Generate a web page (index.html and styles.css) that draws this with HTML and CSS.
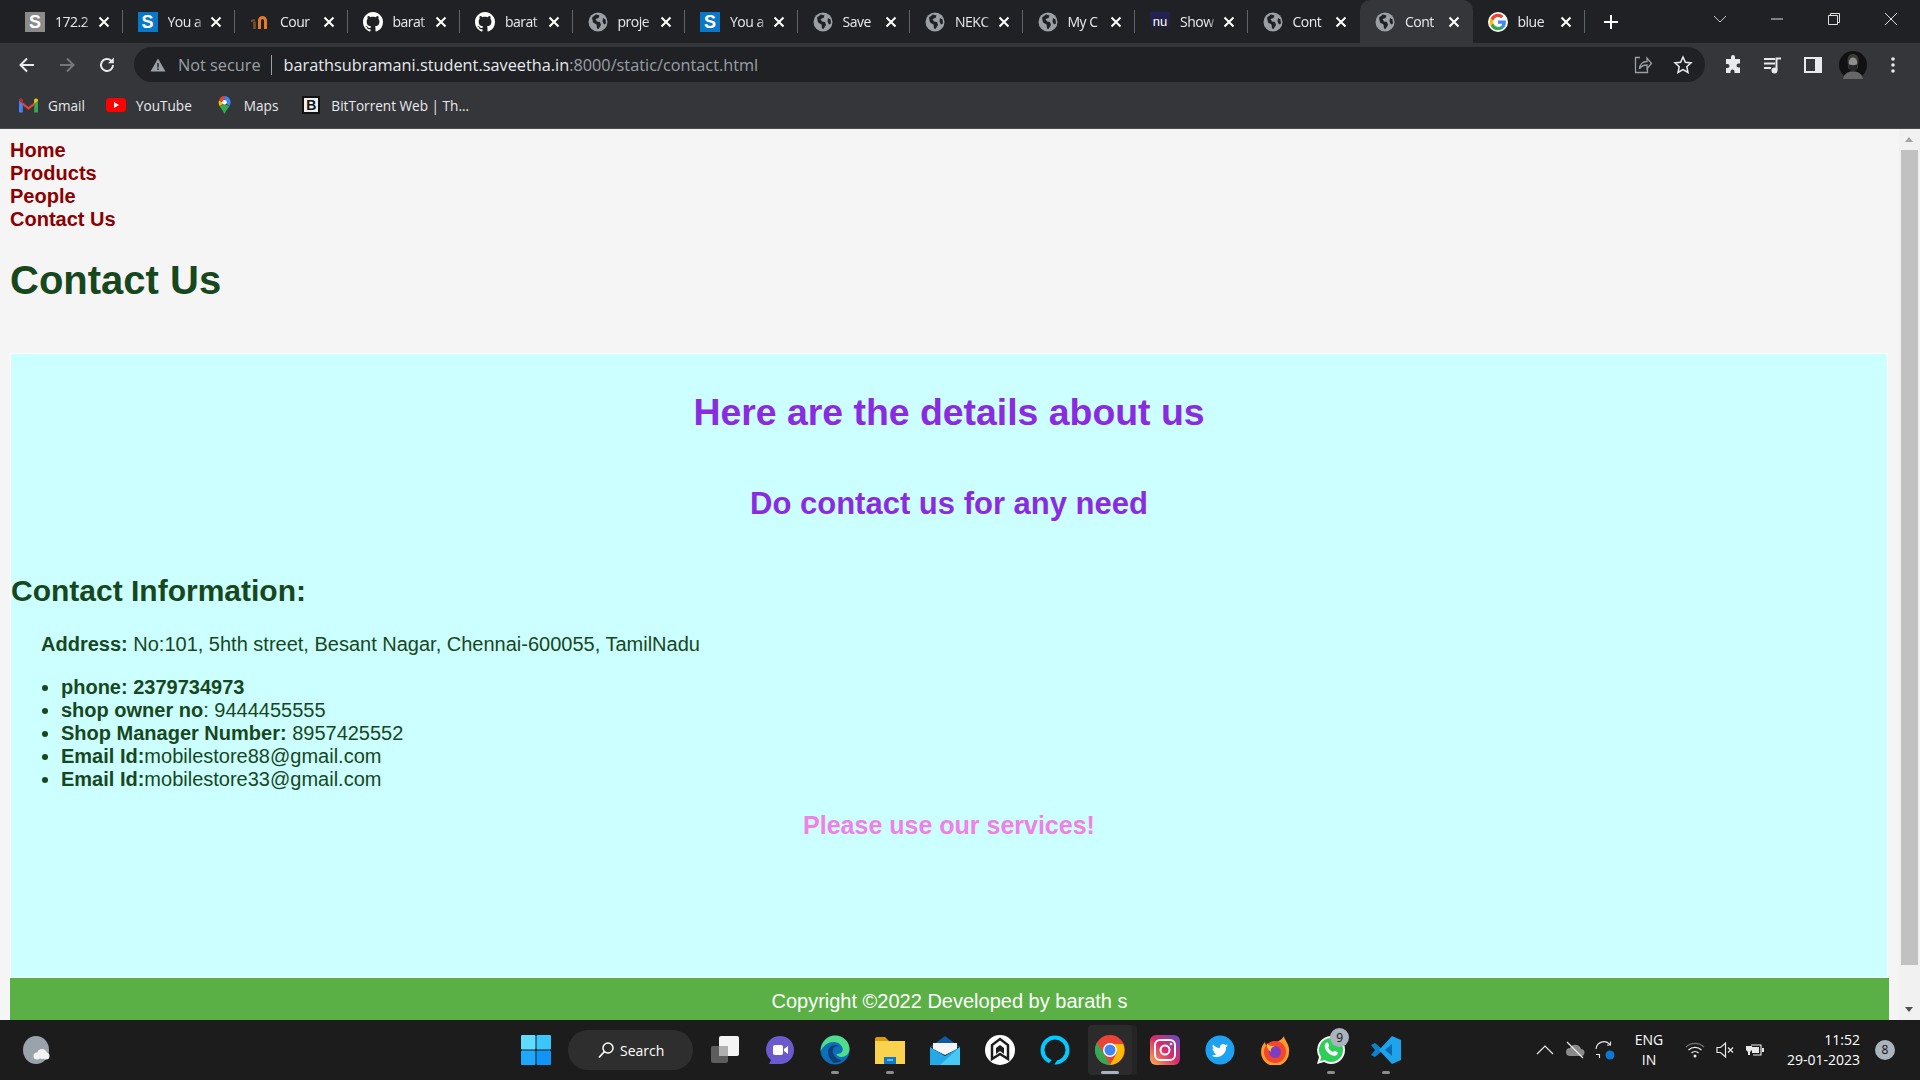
FILE: index.html
```html
<!DOCTYPE html>
<html lang="en">
<head>
    <meta charset="UTF-8">
    <title>Contact Us</title>
    <link rel="stylesheet" href="styles.css">
</head>
<body>
    <svg class="sprites" width="0" height="0">
        <symbol id="globe" viewBox="0 0 20 20">
            <circle cx="10" cy="10" r="9.5" fill="#9aa0a6"/>
            <path fill="#202124" d="M4 5.5 8 2.5l3.5 1-1 2.5-3 1 1.500 2.500 3 .5 1 3-2.500 4-1.500-.5-.5-4-3.500-2zM15 6l2.500 1.500.5 4-2 1-1.500-3z"/>
        </symbol>
        <symbol id="github" viewBox="0 0 16 16">
            <path fill="#fff" d="M8 0C3.58 0 0 3.58 0 8c0 3.54 2.29 6.53 5.47 7.59.4.07.55-.17.55-.38 0-.19-.01-.82-.01-1.49-2.01.37-2.53-.49-2.69-.94-.09-.23-.48-.94-.82-1.13-.28-.15-.68-.52-.01-.53.63-.01 1.08.58 1.23.82.72 1.21 1.87.87 2.33.66.07-.52.28-.87.51-1.07-1.78-.2-3.64-.89-3.64-3.95 0-.87.31-1.59.82-2.15-.08-.2-.36-1.02.08-2.12 0 0 .67-.21 2.2.82.64-.18 1.32-.27 2-.27.68 0 1.36.09 2 .27 1.53-1.04 2.2-.82 2.2-.82.44 1.1.16 1.92.08 2.12.51.56.82 1.27.82 2.15 0 3.07-1.87 3.75-3.65 3.95.29.25.54.73.54 1.48 0 1.07-.01 1.93-.01 2.2 0 .21.15.46.55.38A8.013 8.013 0 0016 8c0-4.42-3.58-8-8-8z"/>
        </symbol>
        <symbol id="close" viewBox="0 0 12 12">
            <path stroke="#fff" stroke-width="2" d="M1.500 1.500l9 9M10.500 1.500l-9 9"/>
        </symbol>
    </svg>

    <div class="tabstrip">
        <div class="tab"><span class="favicon fav-grey">S</span><span class="tab-title">172.2</span><svg class="tab-close"><use href="#close"/></svg></div>
        <div class="tab"><span class="favicon fav-blue">S</span><span class="tab-title">You a</span><svg class="tab-close"><use href="#close"/></svg></div>
        <div class="tab"><svg class="favicon" viewBox="0 0 20 20"><path fill="none" stroke="#e8792b" stroke-width="3" d="M9.500 17V8.500a2.500 2.500 0 0 1 6 0V17"/><path fill="none" stroke="#7a5230" stroke-width="2.500" d="M4.500 17V9.500"/><path fill="none" stroke="#7a5230" stroke-width="2" d="M1 9.500c1-1 2.500-1.500 4-1"/></svg><span class="tab-title">Cour</span><svg class="tab-close"><use href="#close"/></svg></div>
        <div class="tab"><svg class="favicon"><use href="#github"/></svg><span class="tab-title">barat</span><svg class="tab-close"><use href="#close"/></svg></div>
        <div class="tab"><svg class="favicon"><use href="#github"/></svg><span class="tab-title">barat</span><svg class="tab-close"><use href="#close"/></svg></div>
        <div class="tab"><svg class="favicon"><use href="#globe"/></svg><span class="tab-title">proje</span><svg class="tab-close"><use href="#close"/></svg></div>
        <div class="tab"><span class="favicon fav-blue">S</span><span class="tab-title">You a</span><svg class="tab-close"><use href="#close"/></svg></div>
        <div class="tab"><svg class="favicon"><use href="#globe"/></svg><span class="tab-title">Save</span><svg class="tab-close"><use href="#close"/></svg></div>
        <div class="tab"><svg class="favicon"><use href="#globe"/></svg><span class="tab-title">NEKC</span><svg class="tab-close"><use href="#close"/></svg></div>
        <div class="tab"><svg class="favicon"><use href="#globe"/></svg><span class="tab-title">My C</span><svg class="tab-close"><use href="#close"/></svg></div>
        <div class="tab"><span class="favicon fav-nu">nu</span><span class="tab-title">Show</span><svg class="tab-close"><use href="#close"/></svg></div>
        <div class="tab no-sep"><svg class="favicon"><use href="#globe"/></svg><span class="tab-title">Cont</span><svg class="tab-close"><use href="#close"/></svg></div>
        <div class="tab active"><svg class="favicon"><use href="#globe"/></svg><span class="tab-title">Cont</span><svg class="tab-close"><use href="#close"/></svg></div>
        <div class="tab"><svg class="favicon" viewBox="-2 -2 22 22"><circle cx="9" cy="9" r="11" fill="#fff"/><path fill="#4285F4" d="M17.640 9.200c0-.64-.06-1.250-.16-1.840H9v3.480h4.840a4.140 4.140 0 0 1-1.800 2.720v2.260h2.920c1.700-1.570 2.680-3.880 2.680-6.620z"/><path fill="#34A853" d="M9 18c2.430 0 4.470-.8 5.960-2.180l-2.920-2.260c-.8.54-1.830.86-3.040.86-2.340 0-4.320-1.580-5.030-3.700H.96v2.330A9 9 0 0 0 9 18z"/><path fill="#FBBC05" d="M3.970 10.710A5.410 5.410 0 0 1 3.680 9c0-.59.1-1.170.29-1.710V4.960H.96A9 9 0 0 0 0 9c0 1.450.35 2.830.96 4.040l3.010-2.330z"/><path fill="#EA4335" d="M9 3.580c1.320 0 2.500.45 3.440 1.350l2.580-2.580A9 9 0 0 0 9 0 9 9 0 0 0 .96 4.960l3.010 2.330C4.680 5.160 6.660 3.580 9 3.580z"/></svg><span class="tab-title">blue</span><svg class="tab-close"><use href="#close"/></svg></div>
        <svg class="new-tab" viewBox="0 0 16 16"><path stroke="#fff" stroke-width="2" d="M8 1v14M1 8h14"/></svg>
        <div class="window-controls">
            <svg viewBox="0 0 14 14"><path fill="none" stroke="#c8c8c8" d="M1 4l6 6 6-6"/></svg>
            <svg viewBox="0 0 14 14"><path stroke="#e0e0e0" d="M1 7h12"/></svg>
            <svg viewBox="0 0 14 14"><path fill="none" stroke="#e0e0e0" d="M1.500 3.500h9v9h-9zM3.500 3.500v-2h9v9h-2"/></svg>
            <svg viewBox="0 0 14 14"><path stroke="#e0e0e0" d="M1 1l12 12M13 1L1 13"/></svg>
        </div>
    </div>

    <div class="toolbar">
        <div class="tool"><svg viewBox="0 0 20 20"><path fill="none" stroke="#e8eaed" stroke-width="2" d="M17 10H4M10 3.500L3.500 10l6.500 6.500"/></svg></div>
        <div class="tool"><svg viewBox="0 0 20 20"><path fill="none" stroke="#74777b" stroke-width="2" d="M3 10h13M10 3.500l6.500 6.500-6.500 6.500"/></svg></div>
        <div class="tool"><svg viewBox="0 0 20 20"><path fill="none" stroke="#e8eaed" stroke-width="2" d="M16 10a6 6 0 1 1-1.800-4.300"/><path fill="#e8eaed" d="M16.800 2.500v5.800H11z"/></svg></div>
        <div class="omnibox">
            <svg class="warn" viewBox="0 0 16 16"><path fill="#9aa0a6" d="M8 1.500l7.500 13H.5z"/><path stroke="#202124" stroke-width="1.400" d="M8 6v4.500M8 11.500v1.500"/></svg>
            <span class="not-secure">Not secure</span>
            <span class="url"><span class="url-host">barathsubramani.student.saveetha.in</span>:8000/static/contact.html</span>
            <div class="tool"><svg viewBox="0 0 20 20"><path fill="none" stroke="#9aa0a6" stroke-width="1.300" d="M7 2.500H2.500v15h12V13M6.500 14c0-5 3.500-7.500 7.500-7.500V3l4.500 5.500L14 13.500V10c-3.500 0-6 1-7.500 4z"/></svg></div>
            <div class="tool"><svg viewBox="0 0 20 20"><path fill="none" stroke="#e8eaed" stroke-width="1.500" d="M10 2l2.400 5.300 5.600.6-4.200 3.800 1.200 5.800-5-2.900-5 2.900 1.200-5.800L2 7.900l5.600-.6z"/></svg></div>
        </div>
        <div class="tool"><svg viewBox="0 0 20 20"><path fill="#e8eaed" d="M8 2a2 2 0 0 1 4 0v2h5v4.500h-1.500a2 2 0 0 0 0 4H17V18h-5.500v-1.500a2 2 0 0 0-4 0V18H3v-5h1.500a2 2 0 0 0 0-4H3V4h5z"/></svg></div>
        <div class="tool"><svg viewBox="0 0 20 20"><path stroke="#e8eaed" stroke-width="1.800" d="M1 4h11M1 8.500h11M1 13h7"/><path fill="none" stroke="#e8eaed" stroke-width="2" d="M13.500 15V3.500H18"/><circle cx="11.500" cy="15.500" r="3" fill="#e8eaed"/></svg></div>
        <div class="tool"><svg viewBox="0 0 20 20"><path fill="none" stroke="#e8eaed" stroke-width="2" d="M2 3h16v14H2z"/><path fill="#e8eaed" d="M12 3h6v14h-6z"/></svg></div>
        <div class="tool"><svg class="avatar" viewBox="0 0 28 28"><circle cx="14" cy="14" r="14" fill="#111"/><path fill="#3a3a3a" d="M8.500 9c0-4 2.500-6 5.500-6s5.500 2 5.500 6l-.5 8-5 4-5-4z"/><ellipse cx="14" cy="11.500" rx="4.200" ry="5" fill="#8f8f8f"/><path fill="#262626" d="M9.500 13c1.500 1.500 7.500 1.500 9 0l-1 6-3.500 2-3.500-2z"/><path fill="#666" d="M4 28c1-5 4-7.500 10-7.500s9 2.500 10 7.500z"/></svg></div>
        <div class="tool"><svg viewBox="0 0 20 20"><circle cx="10" cy="4" r="1.800" fill="#e8eaed"/><circle cx="10" cy="10" r="1.800" fill="#e8eaed"/><circle cx="10" cy="16" r="1.800" fill="#e8eaed"/></svg></div>
    </div>

    <div class="bookmarks">
        <div class="bookmark bm-gmail"><svg viewBox="0 0 20 16"><path fill="#ea4335" d="M1 3l9 7 9-7v3l-9 7-9-7z"/><path fill="#4285f4" d="M0 3a2 2 0 0 1 3-1.500L4 2.300V16H1a1 1 0 0 1-1-1z"/><path fill="#34a853" d="M20 3a2 2 0 0 0-3-1.500l-1 .8V16h3a1 1 0 0 0 1-1z"/><path fill="#c5221f" d="M0 3.500 4 6.600V2.300L3 1.500A2 2 0 0 0 0 3.500z"/><path fill="#fbbc04" d="M20 3.500 16 6.600V2.300l1-.8A2 2 0 0 1 20 3.500z"/></svg>Gmail</div>
        <div class="bookmark bm-youtube"><svg viewBox="0 0 20 14"><rect width="20" height="14" rx="3.500" fill="#f00"/><path fill="#fff" d="M8 4l5 3-5 3z"/></svg>YouTube</div>
        <div class="bookmark bm-maps"><svg viewBox="0 0 14 20"><path fill="#34a853" d="M7 20c-1-3-4-6-5.500-9L7 9l5.500 2C11 14 8 17 7 20z"/><path fill="#fbbc04" d="M1.500 11A6.500 6.500 0 0 1 1 5l6 3z"/><path fill="#ea4335" d="M1 5a6.500 6.500 0 0 1 6-5v7z"/><path fill="#4285f4" d="M7 0a7 7 0 0 1 5.500 11L7 7z"/><circle cx="7" cy="7" r="2.500" fill="#fff"/></svg>Maps</div>
        <div class="bookmark bm-bittorrent"><span class="bt-icon">B</span>BitTorrent Web | Th...</div>
    </div>

    <div class="viewport">
        <div class="page">
            <nav class="site-nav">
                <a href="#">Home</a>
                <a href="#">Products</a>
                <a href="#">People</a>
                <a href="#">Contact Us</a>
            </nav>
            <h1>Contact Us</h1>
            <section class="details">
                <h2>Here are the details about us</h2>
                <h3>Do contact us for any need</h3>
                <h4>Contact Information:</h4>
                <p class="address"><b>Address:</b> No:101, 5hth street, Besant Nagar, Chennai-600055, TamilNadu</p>
                <ul>
                    <li><b>phone: 2379734973</b></li>
                    <li><b>shop owner no</b>: 9444455555</li>
                    <li><b>Shop Manager Number:</b> 8957425552</li>
                    <li><b>Email Id:</b>mobilestore88@gmail.com</li>
                    <li><b>Email Id:</b>mobilestore33@gmail.com</li>
                </ul>
                <p class="services">Please use our services!</p>
            </section>
            <footer>Copyright ©2022 Developed by barath s</footer>
        </div>
        <div class="scrollbar">
            <span class="arrow-up"></span>
            <span class="thumb"></span>
            <span class="arrow-down"></span>
        </div>
    </div>

    <div class="taskbar">
        <svg class="widget" viewBox="0 0 30 30"><ellipse cx="14" cy="15" rx="13" ry="14" fill="#9aa3ac"/><circle cx="20" cy="19" r="5" fill="#f2f2f2"/><circle cx="15" cy="21" r="3.500" fill="#f2f2f2"/><circle cx="24" cy="21" r="3.500" fill="#f2f2f2"/></svg>
        <div class="start-cell">
            <svg viewBox="0 0 30 30"><rect width="14.500" height="14.500" rx="1" fill="#5fdcff"/><rect x="15.500" width="14.500" height="14.500" rx="1" fill="#3bc6fb"/><rect y="15.500" width="14.500" height="14.500" rx="1" fill="#1ea7fb"/><rect x="15.500" y="15.500" width="14.500" height="14.500" rx="1" fill="#0f94f8"/></svg>
        </div>
        <div class="search-pill"><svg viewBox="0 0 18 18"><circle cx="11" cy="7" r="5" fill="none" stroke="#fff" stroke-width="1.500"/><path stroke="#fff" stroke-width="1.700" d="M7.500 10.500L2 16.500"/></svg>Search</div>
        <div class="apps">
            <div class="app"><svg viewBox="0 0 30 30"><rect x="1" y="11" width="17" height="17" rx="2" fill="#5d5d5d"/><rect x="9" y="1" width="20" height="20" rx="2" fill="#f4f4f4"/><rect x="9" y="11" width="9" height="10" fill="#b0b0b0"/></svg></div>
            <div class="app teams"><svg viewBox="0 0 30 30"><path fill="#6a5acd" d="M15 1c8 0 14 6 14 14s-6 14-14 14H4l2-4a14 14 0 0 1-5-10C1 7 7 1 15 1z"/><rect x="8" y="10" width="10" height="10" rx="2" fill="#fff"/><path fill="#fff" d="M19 14l4-3v8l-4-3z"/></svg></div>
            <div class="app on"><svg viewBox="0 0 30 30"><circle cx="15" cy="15" r="14.500" fill="#0c6fb8"/><path fill="#4fdc8c" d="M15 .5c8 0 14.500 6 14.500 13.500 0 5-4 8-8 8-3 0-5-1.500-5-3 5 0 7-3 6-6-1.500-4-5-6-9-6-6 0-10 4-13 9C1 7 7 .5 15 .5z"/><path fill="#103f78" d="M8 17c0-4 3-7 7-7 2 0 3 .5 4 1.500-4-1-7 2-6 6 1 5 6 8 10 7.500a14 14 0 0 1-9 3C10 25 8 21 8 17z"/></svg></div>
            <div class="app on"><svg viewBox="0 0 30 30"><path fill="#d79c0c" d="M0 4a2 2 0 0 1 2-2h8l4 4h-14z"/><path fill="#fbd24e" d="M0 6h30v23H0z"/><rect x="9" y="22" width="12" height="7" fill="#0f78c8"/><path stroke="#7fcbf5" stroke-width="1.500" d="M12 25h6"/></svg></div>
            <div class="app"><svg viewBox="0 0 30 30"><path fill="#0d5aa7" d="M15 1L30 12H0z"/><path fill="#f5f5f5" d="M3 8h24v6L15 20 3 14z"/><path fill="#23a9e8" d="M0 12l15 9 15-9v18H0z"/><path fill="#48c9f5" d="M30 12v18H10z"/></svg></div>
            <div class="app"><svg viewBox="0 0 30 30"><circle cx="15" cy="15" r="15" fill="#fff"/><path fill="none" stroke="#1c1c1c" stroke-width="2.500" d="M7 24V10l8-6 8 6v14l-8-5z"/><path fill="#1c1c1c" d="M11 13l4-3 4 3v6l-4-3-4 3z"/></svg></div>
            <div class="app"><svg viewBox="0 0 30 30"><circle cx="15" cy="15" r="12.500" fill="none" stroke="#00caff" stroke-width="4"/><path fill="#1c1c1c" d="M8 29l7-7 3 2-4 6z"/></svg></div>
            <div class="app chrome-app"><svg viewBox="0 0 30 30"><circle cx="15" cy="15" r="15" fill="#ea4335"/><path fill="#34a853" d="M15 30A15 15 0 0 1 2 7.500L9 19l6 11z"/><path fill="#fbbc04" d="M15 30l7.500-13L15 9h13a15 15 0 0 1-13 21z"/><circle cx="15" cy="15" r="7" fill="#fff"/><circle cx="15" cy="15" r="5.500" fill="#4285f4"/></svg></div>
            <div class="app"><svg viewBox="0 0 30 30"><defs><linearGradient id="insta" x1="0" y1="1" x2="1" y2="0"><stop offset="0" stop-color="#fdb44b"/><stop offset=".5" stop-color="#dc2a6b"/><stop offset="1" stop-color="#5b4fc8"/></linearGradient></defs><rect width="30" height="30" rx="6" fill="url(#insta)"/><rect x="5" y="5" width="20" height="20" rx="5" fill="none" stroke="#fff" stroke-width="2"/><circle cx="15" cy="15" r="4.500" fill="none" stroke="#fff" stroke-width="2"/><circle cx="21" cy="9" r="1.300" fill="#fff"/></svg></div>
            <div class="app"><svg viewBox="0 0 30 30"><circle cx="15" cy="15" r="14.500" fill="#1da1f2"/><path fill="#fff" d="M23 10.500c-.6.300-1.200.4-1.900.5.700-.4 1.200-1 1.400-1.800-.6.400-1.300.6-2.100.8a3.300 3.300 0 0 0-5.600 3C12 12.800 9.600 11.500 8 9.500c-.9 1.500-.4 3.400 1 4.400-.5 0-1-.2-1.500-.4 0 1.600 1.100 3 2.600 3.300-.5.100-1 .1-1.500 0 .4 1.300 1.600 2.200 3.100 2.300-1.400 1.100-3.200 1.600-4.900 1.400 1.500 1 3.200 1.500 5 1.500 6.100 0 9.500-5.100 9.300-9.700.7-.5 1.200-1.100 1.900-1.800z"/></svg></div>
            <div class="app"><svg viewBox="0 0 30 30"><path fill="#ff9a2e" d="M24 1c0 4 6 8 5 16a14 14 0 0 1-28 0c0-5 2-8 4-10 0 2 1 3 2 4 2-4 6-5 8-3 3-2 7-3 9-7z"/><circle cx="15" cy="17" r="11" fill="#f5452c"/><circle cx="15" cy="17" r="6" fill="#7b3fc4"/><path fill="#ffc13d" d="M7 8c1 3 5 3 8 3-3 1-5 3-4 6-3-2-5-5-4-9z"/></svg></div>
            <div class="app on whatsapp"><svg viewBox="0 0 30 30"><path fill="#fff" d="M15 1a14 14 0 0 1 0 28 14 14 0 0 1-7-2l-7 2 2-7A14 14 0 0 1 15 1z"/><path fill="#2ecf58" d="M15 3a12 12 0 0 1 0 24c-2.500 0-4.500-.8-6.500-2l-4.500 1.300 1.300-4.300A12 12 0 0 1 15 3z"/><path fill="#fff" d="M10 8c1-.8 2-.5 2.400.5l.8 2c.2.600-.6 1.500-1 2 1 2 2.500 3.500 4.800 4.600.5-.6 1.200-1.500 1.800-1.300l2.400 1.200c.8.500.6 1.700 0 2.400-3 3-7 .5-9.500-2C9 14.500 7.500 10.500 10 8z"/></svg><span class="badge">9</span></div>
            <div class="app on"><svg viewBox="0 0 30 30"><path fill="#0a84d0" d="M0 10l4-2 8 7-8 7-4-2 4-5z"/><path fill="#1ea4ed" d="M21 1l9 4v20l-9 4L8 15z"/><path fill="#0a6cb0" d="M21 9v12l-7-6z"/></svg></div>
        </div>
        <div class="tray">
            <div class="tray-cell"><svg viewBox="0 0 20 20"><path fill="none" stroke="#e8e8e8" stroke-width="1.200" d="M2 14l8-8 8 8"/></svg></div>
            <div class="tray-cell"><svg viewBox="0 0 20 20"><path fill="#8a8a8a" d="M5 16a4 4 0 0 1 0-8 6 6 0 0 1 11 1 3.500 3.500 0 0 1 0 7z"/><path stroke="#e8e8e8" stroke-width="1.200" d="M2 2l16 16"/></svg></div>
            <div class="tray-cell"><svg viewBox="0 0 20 20"><path fill="none" stroke="#e8e8e8" stroke-width="1.100" d="M1 9a8 8 0 0 1 14-4.500M15.500 1.500v3.500H12M1 14.500h3.500v3.500"/><circle cx="15" cy="15" r="4.500" fill="#0f78d4"/></svg></div>
            <div class="lang">ENG<br>IN</div>
            <div class="tray-cell"><svg viewBox="0 0 20 20"><path fill="none" stroke="#777" stroke-width="1.200" d="M1 7a13 13 0 0 1 18 0"/><path fill="none" stroke="#eee" stroke-width="1.300" d="M3.500 10a9.500 9.500 0 0 1 13 0M6.500 13a5 5 0 0 1 7 0"/><circle cx="10" cy="16" r="1.500" fill="#eee"/></svg></div>
            <div class="tray-cell"><svg viewBox="0 0 20 20"><path fill="none" stroke="#e8e8e8" stroke-width="1.200" d="M2 7.500h3.500l5-4.500v14l-5-4.500H2zM13 7.500l5 5M18 7.500l-5 5"/></svg></div>
            <div class="tray-cell"><svg viewBox="0 0 20 20"><path fill="none" stroke="#e8e8e8" stroke-width="1.200" d="M6 5h10v10H8"/><rect x="7" y="7" width="7" height="6" fill="#e8e8e8"/><path fill="#e8e8e8" d="M17 8h2v4h-2zM1 6h6v4l-2 2v3H3v-3L1 10z"/></svg></div>
            <div class="clock">11:52<br>29-01-2023</div>
            <span class="notif">8</span>
        </div>
    </div>
</body>
</html>
```

FILE: styles.css
```css
* {
    box-sizing: border-box;
}

html,
body {
    margin: 0;
    height: 100%;
    overflow: hidden;
}

body {
    display: flex;
    flex-direction: column;
    width: 1920px;
    height: 1080px;
    font-family: "Liberation Sans", Arial, sans-serif;
}

.sprites {
    display: block;
    height: 0;
}

/* browser chrome */

.tabstrip {
    display: flex;
    align-items: center;
    flex: none;
    height: 43px;
    padding-left: 10px;
    background-color: #202124;
    font-family: "Open Sans", sans-serif;
    font-size: 14px;
    color: #e8eaed;
}

.tab {
    position: relative;
    display: flex;
    align-items: center;
    flex: none;
    width: 112.5px;
    height: 100%;
    padding: 0 13px 0 15px;
}

.tab::after {
    content: "";
    position: absolute;
    right: 0;
    top: 10px;
    bottom: 10px;
    width: 1px;
    background-color: #5f6368;
}

.tab.no-sep::after,
.tab.active::after {
    display: none;
}

.tab.active {
    background-color: #35363a;
    border-radius: 10px 10px 0 0;
}

.favicon {
    display: block;
    flex: none;
    width: 20px;
    height: 20px;
    margin-right: 10px;
    font-family: "Liberation Sans", sans-serif;
    font-size: 18px;
    font-weight: bold;
    line-height: 20px;
    text-align: center;
    color: #fff;
}

.fav-grey {
    background-color: #8b8b8b;
}

.fav-blue {
    background-color: #0a78c8;
}

.fav-nu {
    font-size: 13px;
    font-weight: normal;
    background: linear-gradient(#23225a, #202124);
}

.tab-title {
    flex: 1;
    min-width: 0;
    white-space: nowrap;
    letter-spacing: -0.5px;
    -webkit-mask-image: linear-gradient(90deg, #000 75%, transparent);
    mask-image: linear-gradient(90deg, #000 75%, transparent);
}

.tab-close {
    flex: none;
    width: 12px;
    height: 12px;
    margin-left: 5px;
}

.new-tab {
    flex: none;
    width: 16px;
    height: 16px;
    margin-left: 18px;
}

.window-controls {
    display: flex;
    margin-left: auto;
    padding-right: 22px;
    gap: 43px;
    align-self: flex-start;
    padding-top: 12px;
}

.window-controls svg {
    width: 14px;
    height: 14px;
}

.toolbar {
    display: flex;
    align-items: center;
    flex: none;
    height: 43px;
    padding: 0 7px;
    background-color: #35363a;
}

.tool {
    display: flex;
    align-items: center;
    justify-content: center;
    flex: none;
    width: 40px;
    height: 35px;
}

.tool svg {
    width: 20px;
    height: 20px;
}

.tool svg.avatar {
    width: 28px;
    height: 28px;
}

.omnibox {
    display: flex;
    align-items: center;
    flex: none;
    width: 1571px;
    height: 35px;
    margin: 0 8px 0 7px;
    padding: 0 2px 0 16px;
    background-color: #202124;
    border-radius: 18px;
    font-family: "Open Sans", sans-serif;
    font-size: 16.300px;
    color: #9aa0a6;
}

.warn {
    flex: none;
    width: 16px;
    height: 16px;
    margin-right: 12px;
}

.not-secure {
    padding-right: 10px;
    border-right: 1px solid #9aa0a6;
    line-height: 20px;
    white-space: nowrap;
}

.url {
    flex: 1;
    padding-left: 12px;
    white-space: nowrap;
}

.url-host {
    color: #e8eaed;
}

.bookmarks {
    display: flex;
    align-items: center;
    flex: none;
    height: 43px;
    padding-bottom: 4px;
    background-color: #35363a;
    border-bottom: 1px solid #4a4b4f;
    font-family: "Open Sans", sans-serif;
    font-size: 13.600px;
    color: #e8eaed;
}

.bookmark {
    display: flex;
    align-items: center;
    gap: 10px;
    white-space: nowrap;
}

.bookmark svg {
    flex: none;
    height: 18px;
}

.bm-gmail {
    margin-left: 19px;
}

.bm-gmail svg {
    width: 19px;
}

.bm-youtube {
    margin-left: 21px;
}

.bm-youtube svg {
    width: 20px;
}

.bm-maps {
    gap: 13px;
    margin-left: 26px;
}

.bm-maps svg {
    width: 13px;
}

.bm-bittorrent {
    gap: 11px;
    margin-left: 24px;
}

.bt-icon {
    width: 18px;
    height: 18px;
    border: 2px solid #111;
    background-color: #eee;
    font-family: "Liberation Sans", sans-serif;
    font-size: 14px;
    font-weight: bold;
    line-height: 14px;
    text-align: center;
    color: #111;
}

/* the page */

.viewport {
    display: flex;
    flex: 1;
    min-height: 0;
    background-color: #f5f5f5;
}

.page {
    flex: 1;
    min-width: 0;
    padding: 10px 10px 0;
    overflow: hidden;
    color: #17471d;
}

.site-nav a {
    display: block;
    font-size: 20px;
    font-weight: bold;
    line-height: 23px;
    color: #8b0000;
    text-decoration: none;
}

h1 {
    margin: 26px 0 50px;
    font-size: 40px;
    line-height: 46px;
}

.details {
    height: 625px;
    background-color: #ccffff;
    border: 1px solid #fff;
    margin-right: 1px;
}

.details h2,
.details h3 {
    margin: 0;
    text-align: center;
    color: #8a2be2;
}

.details h2 {
    padding-top: 37px;
    font-size: 37.400px;
    line-height: 42px;
}

.details h3 {
    padding-top: 52px;
    font-size: 31px;
    line-height: 37px;
}

.details h4 {
    margin: 50px 0 0;
    font-size: 30px;
    line-height: 37px;
}

.address {
    margin: 24px 0 0;
    padding-left: 30px;
    font-size: 20px;
    line-height: 23px;
}

.details ul {
    margin: 20px 0 0;
    padding-left: 50px;
    font-size: 20px;
    line-height: 23px;
}

.services {
    margin: 20px 0 0;
    text-align: center;
    font-size: 25px;
    font-weight: bold;
    line-height: 29px;
    color: #f080e8;
}

footer {
    height: 80px;
    padding-top: 12px;
    background-color: #5ab045;
    text-align: center;
    font-size: 20px;
    line-height: 23px;
    color: #fff;
}

.scrollbar {
    position: relative;
    flex: none;
    width: 21px;
    background-color: #f1f1f1;
}

.thumb {
    position: absolute;
    top: 21px;
    left: 2px;
    width: 17px;
    height: 815px;
    background-color: #c1c1c1;
}

.arrow-up,
.arrow-down {
    position: absolute;
    left: 6px;
    width: 0;
    height: 0;
    border-left: 4.500px solid transparent;
    border-right: 4.500px solid transparent;
}

.arrow-up {
    top: 8px;
    border-bottom: 5px solid #a3a3a3;
}

.arrow-down {
    bottom: 8px;
    border-top: 5px solid #505050;
}

/* windows taskbar */

.taskbar {
    display: flex;
    align-items: center;
    flex: none;
    height: 60px;
    padding-left: 22px;
    background-color: #1c1c1c;
    font-family: "Open Sans", sans-serif;
    color: #fff;
}

.widget {
    flex: none;
    width: 30px;
    height: 30px;
}

.start-cell {
    flex: none;
    width: 30px;
    height: 30px;
    margin-left: 469px;
}

.start-cell svg {
    display: block;
}

.search-pill {
    display: flex;
    align-items: center;
    flex: none;
    width: 125px;
    height: 40px;
    margin-left: 17px;
    padding-left: 29px;
    gap: 5px;
    background-color: #2e2e2e;
    border-radius: 20px;
    font-size: 14px;
}

.search-pill svg {
    width: 18px;
    height: 18px;
}

.apps {
    display: flex;
    flex: none;
    margin-left: 4px;
}

.app {
    position: relative;
    display: flex;
    align-items: center;
    justify-content: center;
    flex: none;
    width: 55.100px;
    height: 50px;
}

.app svg {
    width: 30px;
    height: 30px;
}

.app.on::after,
.chrome-app::after {
    content: "";
    position: absolute;
    left: 50%;
    bottom: 1px;
    width: 8px;
    height: 3px;
    margin-left: -4px;
    background-color: #8d8d8d;
    border-radius: 2px;
}

.chrome-app {
    background-color: #2b2b2b;
    border-radius: 4px;
    box-shadow: 5px 0 0 #242424;
    width: 44px;
    margin: 0 5.550px;
}

.chrome-app::after {
    width: 18px;
    margin-left: -9px;
    background-color: #a5b4c2;
}

.badge {
    position: absolute;
    top: 3px;
    right: 9px;
    width: 19px;
    height: 19px;
    background-color: #a9b4bd;
    border-radius: 50%;
    font-size: 12px;
    line-height: 19px;
    text-align: center;
    color: #111;
}

.tray {
    display: flex;
    align-items: center;
    margin-left: auto;
    padding-right: 25px;
    font-size: 14px;
}

.tray-cell {
    display: flex;
    align-items: center;
    justify-content: center;
    width: 30px;
}

.tray-cell svg {
    width: 20px;
    height: 20px;
}

.lang {
    width: 50px;
    margin: 0 6px 0 4px;
    font-size: 14px;
    line-height: 20px;
    text-align: center;
}

.clock {
    width: 90px;
    text-align: right;
    font-size: 14px;
    line-height: 20px;
}

.notif {
    width: 20px;
    height: 20px;
    margin-left: 15px;
    background-color: #a9b4bd;
    border-radius: 50%;
    font-size: 12px;
    line-height: 20px;
    text-align: center;
    color: #111;
}
```
